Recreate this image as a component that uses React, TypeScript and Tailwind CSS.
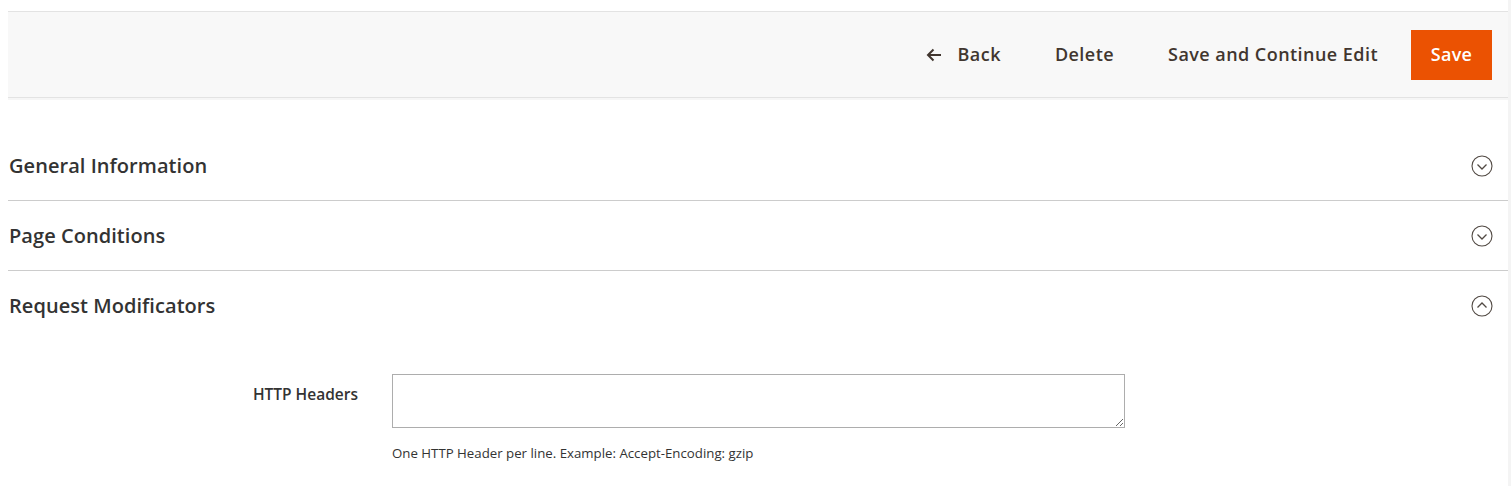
import React from 'react';

const font = { fontFamily: '"Open Sans", "Noto Sans", sans-serif' };

const ChevronCircle = ({ up }: { up?: boolean }) => (
  <svg width="22" height="22" viewBox="0 0 22 22" fill="none">
    <circle cx="11" cy="11" r="10" stroke="#514943" strokeWidth="1.1" />
    {up ? (
      <path d="M6.5 12.5 L11 8 L15.5 12.5" stroke="#514943" strokeWidth="1.3" />
    ) : (
      <path d="M6.5 9.5 L11 14 L15.5 9.5" stroke="#514943" strokeWidth="1.3" />
    )}
  </svg>
);

const Section = ({ title, open }: { title: string; open?: boolean }) => (
  <div className={open ? '' : 'border-b border-[#cccccc]'}>
    <div className="flex h-[69px] items-center justify-between pl-px pr-[15px]">
      <h2 className="text-[20px] font-semibold tracking-[0.05px] text-[#333333]">{title}</h2>
      <ChevronCircle up={open} />
    </div>
  </div>
);

export default function App() {
  return (
    <div className="flex min-h-[486px] bg-white" style={font}>
      <div className="w-2 shrink-0" />
      <div className="flex-1 pt-[11px]">
        <div className="flex h-[87px] items-center justify-end border-y border-[#e3e3e3] bg-[#f8f8f8] pr-4 shadow-[0_2px_0_#f6f6f6]">
          <button className="flex items-center gap-4 text-[18px] font-semibold tracking-[0.45px] text-[#41362f]">
            <svg width="16" height="14" viewBox="0 0 16 14" fill="none">
              <path d="M15 7 H2 M7.5 1.5 L2 7 L7.5 12.5" stroke="#41362f" strokeWidth="2" />
            </svg>
            Back
          </button>
          <button className="ml-[54px] text-[18px] font-semibold tracking-[0.45px] text-[#41362f]">Delete</button>
          <button className="ml-[54px] text-[18px] font-semibold tracking-[0.45px] text-[#41362f]">
            Save and Continue Edit
          </button>
          <button className="ml-[33px] flex h-[50px] w-[81px] items-center justify-center bg-[#eb5202] text-[18px] font-semibold tracking-[0.3px] text-white">
            Save
          </button>
        </div>
        <div className="pt-[33px]">
          <Section title="General Information" />
          <Section title="Page Conditions" />
          <Section title="Request Modificators" open />
          <div className="flex pt-[34px]">
            <label className="w-[384px] pr-[34px] pt-[9px] text-right text-[15.5px] font-semibold text-[#333333]">
              HTTP Headers
            </label>
            <div className="w-[733px]">
              <textarea className="block h-[54px] w-full resize-y border border-[#adadad] bg-white px-2 py-1 text-[14px]" />
              <p className="mt-4 text-[13.25px] text-[#333333]">One HTTP Header per line. Example: Accept-Encoding: gzip</p>
            </div>
          </div>
        </div>
      </div>
      <div className="w-[3px] shrink-0 bg-[#f4f4f4]" />
    </div>
  );
}
